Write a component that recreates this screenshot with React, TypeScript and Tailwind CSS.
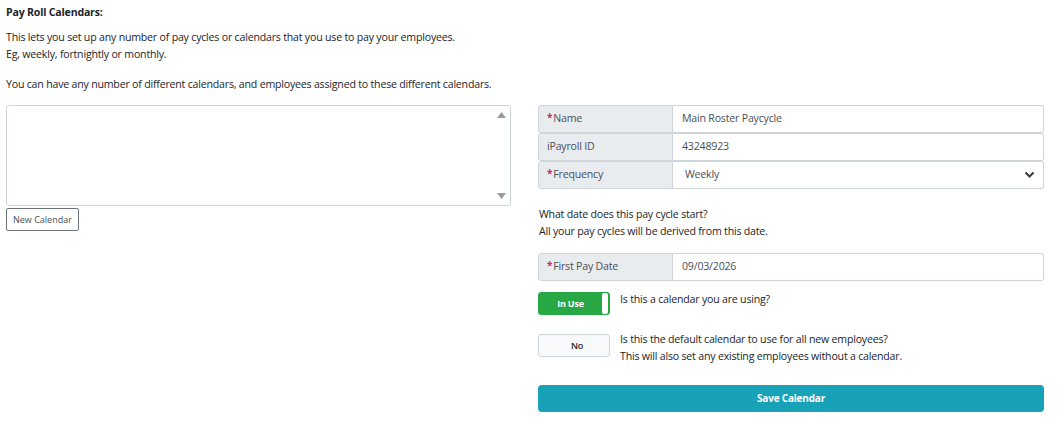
const font = { fontFamily: '"Open Sans", "Noto Sans", sans-serif' };

function Row({
  label,
  required,
  value,
  select,
}: {
  label: string;
  required?: boolean;
  value: string;
  select?: boolean;
}) {
  return (
    <div className="flex h-[28px]">
      <div className="w-[135px] shrink-0 flex items-center pl-[8px] bg-[#e9ecef] border border-[#ced4da] rounded-l-[3px] text-[#495057]">
        {required && <span className="text-[#e0245e] font-bold text-[10px] mr-[1px] -mt-[3px]">*</span>}
        {label}
      </div>
      <div className="flex-1 flex items-center justify-between border border-l-0 border-[#ced4da] rounded-r-[3px] bg-white text-[#495057] pl-[9px] pr-[8px]">
        <span className={select ? "pl-[3px]" : ""}>{value}</span>
        {select && (
          <svg width="11" height="8" viewBox="0 0 11 8">
            <path d="M1.5 1.5 L5.5 5.5 L9.5 1.5" fill="none" stroke="#343a40" strokeWidth="2" />
          </svg>
        )}
      </div>
    </div>
  );
}

export default function App() {
  return (
    <div className="bg-white w-[1064px] h-[434px] px-[6px] text-[10.6px] tracking-[-0.2px] text-[#212529]" style={font}>
      <div className="pt-[4px] leading-[16px] font-bold">Pay Roll Calendars:</div>

      <div className="mt-[9px] leading-[17px]">
        <p>This lets you set up any number of pay cycles or calendars that you use to pay your employees.</p>
        <p>Eg, weekly, fortnightly or monthly.</p>
      </div>
      <p className="mt-[13px] leading-[17px]">
        You can have any number of different calendars, and employees assigned to these different calendars.
      </p>

      <div className="mt-[12px] flex gap-[27px]">
        <div className="w-[505px]">
          <div className="h-[101px] border border-[#ced4da] rounded-[3px] flex justify-end">
            <div className="w-[14px] flex flex-col justify-between items-center py-[6px] mr-[2px]">
              <svg width="9" height="6" viewBox="0 0 9 6">
                <path d="M4.5 0 L9 6 L0 6 Z" fill="#9a9a9a" />
              </svg>
              <svg width="9" height="6" viewBox="0 0 9 6">
                <path d="M0 0 L9 0 L4.5 6 Z" fill="#9a9a9a" />
              </svg>
            </div>
          </div>
          <button className="mt-[2px] h-[23px] px-[6px] border border-[#6c757d] rounded-[2px] text-[9px] text-[#495057] bg-white tracking-normal">
            New Calendar
          </button>
        </div>

        <div className="w-[506px]">
          <div className="flex flex-col">
            <Row label="Name" required value="Main Roster Paycycle" />
            <Row label="iPayroll ID" value="43248923" />
            <Row label="Frequency" required value="Weekly" select />
          </div>

          <div className="mt-[17px] leading-[17px] pl-px">
            <p>What date does this pay cycle start?</p>
            <p>All your pay cycles will be derived from this date.</p>
          </div>

          <div className="mt-[13px]">
            <Row label="First Pay Date" required value="09/03/2026" />
          </div>

          <div className="mt-[11px] flex items-start gap-[10px]">
            <div className="w-[72px] h-[23px] shrink-0 rounded-[3px] bg-[#28a745] border border-[#28a745] flex items-center">
              <span className="flex-1 text-center text-white font-bold text-[9px]">In Use</span>
              <span className="w-[6px] h-[21px] bg-white rounded-[2px] mr-[1px]" />
            </div>
            <p className="leading-[17px] mt-[-1px]">Is this a calendar you are using?</p>
          </div>

          <div className="mt-[19px] flex items-start gap-[10px]">
            <div className="w-[72px] h-[23px] shrink-0 rounded-[3px] bg-[#f8f9fa] border border-[#ced4da] flex items-center justify-center pl-[6px]">
              <span className="text-[#212529] font-semibold text-[9px]">No</span>
            </div>
            <div className="leading-[17px] -mt-[3px]">
              <p>Is this the default calendar to use for all new employees?</p>
              <p>This will also set any existing employees without a calendar.</p>
            </div>
          </div>

          <button className="mt-[20px] w-full h-[27px] rounded-[4px] bg-[#17a2b8] text-white font-bold text-[10px]">
            Save Calendar
          </button>
        </div>
      </div>
    </div>
  );
}
